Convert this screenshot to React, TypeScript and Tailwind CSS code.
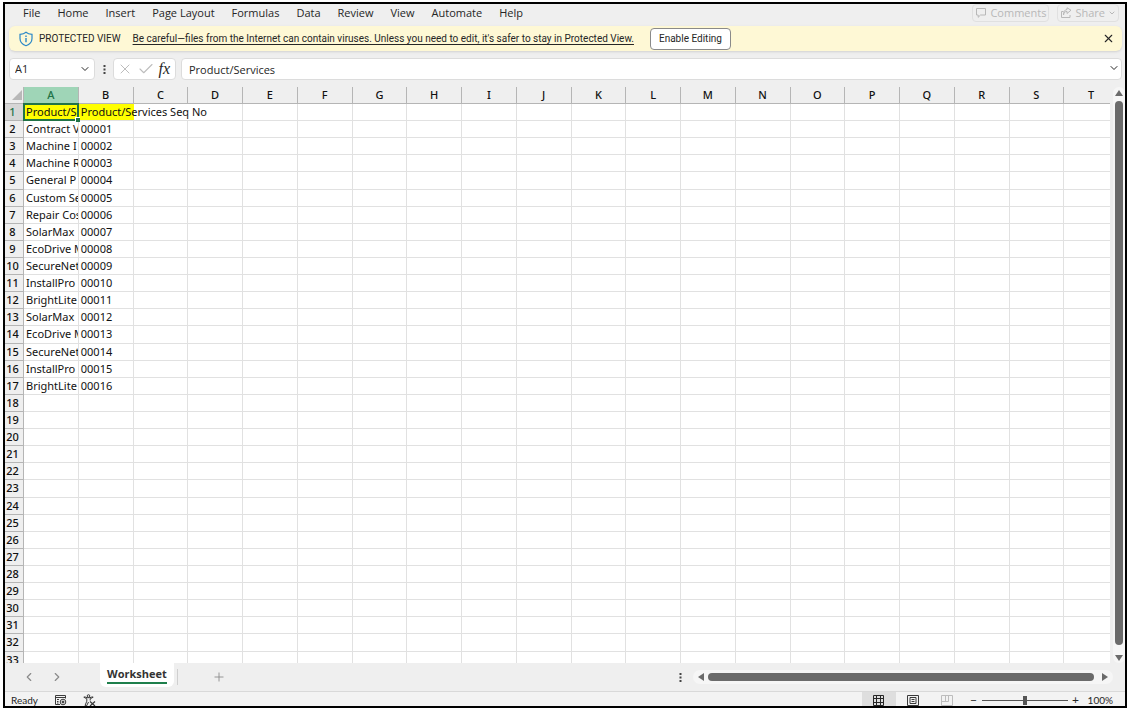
import React, { useState } from 'react';
import { Check, ChevronDown, ChevronLeft, ChevronRight, Plus, X } from 'lucide-react';

interface Row {
  name: string;
  seq: string;
}

const MENU = ['File', 'Home', 'Insert', 'Page Layout', 'Formulas', 'Data', 'Review', 'View', 'Automate', 'Help'];

const COLUMNS = 'ABCDEFGHIJKLMNOPQRST'.split('');

const ROW_COUNT = 33;

const ROWS: Row[] = [
  { name: 'Product/Services', seq: 'Product/Services Seq No' },
  { name: 'Contract V', seq: '00001' },
  { name: 'Machine I', seq: '00002' },
  { name: 'Machine R', seq: '00003' },
  { name: 'General P', seq: '00004' },
  { name: 'Custom Se', seq: '00005' },
  { name: 'Repair Cos', seq: '00006' },
  { name: 'SolarMax', seq: '00007' },
  { name: 'EcoDrive M', seq: '00008' },
  { name: 'SecureNet', seq: '00009' },
  { name: 'InstallPro', seq: '00010' },
  { name: 'BrightLite', seq: '00011' },
  { name: 'SolarMax', seq: '00012' },
  { name: 'EcoDrive M', seq: '00013' },
  { name: 'SecureNet', seq: '00014' },
  { name: 'InstallPro', seq: '00015' },
  { name: 'BrightLite', seq: '00016' },
];

const ShieldIcon = () => (
  <svg viewBox="0 0 14 16" className="h-4 w-[14px]" fill="none" stroke="#2b88c8" strokeWidth="1.2">
    <path d="M7 1.2C5.4 2.6 3.4 3.2 1 3.3v4.2c0 3.4 2.2 5.8 6 7.2 3.8-1.4 6-3.8 6-7.2V3.3C10.6 3.2 8.6 2.6 7 1.2z" />
    <path d="M7 7v4.2M7 4.6v1.4" strokeWidth="1.4" />
  </svg>
);

const CommentIcon = () => (
  <svg viewBox="0 0 12 12" className="h-3 w-3" fill="none" stroke="currentColor">
    <path d="M1.5 1.5h9V8h-5l-2.3 2.3V8H1.5z" />
  </svg>
);

const ShareIcon = () => (
  <svg viewBox="0 0 12 12" className="h-3 w-3" fill="none" stroke="currentColor">
    <path d="M3.5 4.5h-2v6H10V8M3.5 8c.3-2.5 1.5-3.5 3.5-3.600V6.500l4-3.300L7 .8v1.700C4.500 2.700 3.500 5 3.500 8z" />
  </svg>
);

const MacroIcon = () => (
  <svg viewBox="0 0 13 12" className="h-3 w-[13px]" fill="none" stroke="#3b3b3b">
    <path d="M6 10.5H1.5v-9h10v3M1.5 3.5h10M3 5.5h2M3 7.5h1.5M3 9h1.5" />
    <circle cx="9" cy="8" r="2.8" />
    <circle cx="9" cy="8" r="1" fill="#3b3b3b" />
  </svg>
);

const AccessibilityIcon = () => (
  <svg viewBox="0 0 13 13" className="h-[13px] w-[13px]" fill="none" stroke="#3b3b3b">
    <circle cx="5.5" cy="2" r="1.3" />
    <path d="M.8 3.2l3 1.6v2.4L2 11.5l1.5.5 2-4M10.2 3.2l-3 1.6v1.7M.8 3.2c.7-.6 1.2-.3 3.2.5h3c2-.8 2.5-1.1 3.2-.5" />
    <path d="M7 7.5l5 4.5M12 7.5l-5 4.5" strokeWidth="1.2" />
  </svg>
);

const GridViewIcon = () => (
  <svg viewBox="0 0 11 11" className="h-[11px] w-[11px]" fill="none" stroke="#262626">
    <path d="M.5.5h10v10H.5zM.5 3.5h10M.5 7.5h10M3.5.5v10M7.5.5v10" />
  </svg>
);

const PageViewIcon = () => (
  <svg viewBox="0 0 12 11" className="h-[11px] w-3" fill="none" stroke="#3b3b3b">
    <path d="M.5.5h11v10H.5zM3 2.5h6v6H3zM4.5 4.5h3M4.5 6.5h3" />
  </svg>
);

const BreakViewIcon = () => (
  <svg viewBox="0 0 12 11" className="h-[11px] w-3" fill="none" stroke="#bdbdbd">
    <path d="M.5.5h11v10H.5zM4.5.5v6M7.5.5v6M.5 6.5h7" />
  </svg>
);

const Dots = () => (
  <svg viewBox="0 0 3 11" className="h-[11px] w-[3px]" fill="#444">
    <rect x=".5" y="1" width="2" height="2" />
    <rect x=".5" y="4.5" width="2" height="2" />
    <rect x=".5" y="8" width="2" height="2" />
  </svg>
);

const Arrow = ({ d }: { d: string }) => (
  <svg viewBox="0 0 8 8" className="h-2 w-2 shrink-0" fill="#6b6b6b">
    <path d={d} />
  </svg>
);

const Sheet: React.FC = () => {
  const rows = Array.from({ length: ROW_COUNT }, (_, i) => ROWS[i]);

  return (
    <div className="min-w-0 flex-1 overflow-hidden">
      <table className="h-[calc(100%+6px)] w-[calc(100%+9px)] table-fixed border-separate border-spacing-0 bg-white font-['Noto_Sans',sans-serif] text-[11px] leading-4 text-[#111]">
        <thead>
          <tr className="h-[17px] bg-[#efefef]">
            <th className="w-[19px] border-r border-b border-[#b5b5b5] p-0">
              <svg viewBox="0 0 10 10" className="ml-auto h-[10px] w-3" fill="#b8b8b8">
                <path d="M10 0v10H0z" />
              </svg>
            </th>
            {COLUMNS.map((col) => (
              <th
                key={col}
                scope="col"
                className={`border-r border-b p-0 font-medium ${
                  col === 'A' ? 'border-r-[#b5b5b5] border-b-[#217346] bg-[#9fd5b7] text-[#217346]' : 'border-[#b5b5b5]'
                }`}
              >
                {col}
              </th>
            ))}
          </tr>
        </thead>
        <tbody>
          {rows.map((row, i) => (
            <tr key={i} className="h-[17px]">
              <th
                scope="row"
                className={`border-r border-b border-[#b5b5b5] p-0 pr-[3px] font-medium ${
                  i === 0 ? 'bg-[#d6d6d6] text-[#217346]' : 'bg-[#efefef]'
                }`}
              >
                {i + 1}
              </th>
              {COLUMNS.map((col) => {
                const text = col === 'A' ? row?.name : col === 'B' ? row?.seq : undefined;
                const header = i === 0 && text !== undefined;
                // the header in B runs over the empty cells to its right
                const spill = i === 0 && (col === 'B' || col === 'C');
                return (
                  <td
                    key={col}
                    className={`relative border-b border-[#e1e1e1] p-0 ${spill ? '' : 'border-r'} ${
                      header ? 'bg-[#ffff00]' : ''
                    }`}
                  >
                    {text && (
                      <div className={`pl-[2px] whitespace-nowrap ${spill ? 'relative z-10 w-0' : 'overflow-hidden'}`}>
                        {text}
                      </div>
                    )}
                    {i === 0 && col === 'A' && (
                      <div className="absolute -inset-px z-20 border-2 border-[#217346]">
                        <div className="absolute -right-[3px] -bottom-[3px] h-[5px] w-[5px] border-t border-l border-white bg-[#217346]" />
                      </div>
                    )}
                  </td>
                );
              })}
            </tr>
          ))}
        </tbody>
      </table>
    </div>
  );
};

const App: React.FC = () => {
  const [zoom, setZoom] = useState(50);
  const [showBanner, setShowBanner] = useState(true);

  return (
    <div className="h-screen bg-white px-[3px] pt-[2px] pb-[2px] font-['Open_Sans','Noto_Sans',sans-serif] text-[#262626]">
      <div className="flex h-full flex-col overflow-hidden border-2 border-black bg-[#efefef]">
        <header className="flex h-[22px] shrink-0 items-start justify-between pr-[6px] pl-[18px] text-[11px]">
          <nav className="flex gap-[17px]">
            {MENU.map((item) => (
              <button key={item} className="leading-[18px]">
                {item}
              </button>
            ))}
          </nav>
          <div className="flex gap-2 text-[#b8b8b8]">
            <button disabled className="flex h-[18px] items-center gap-[3px] rounded-sm border border-[#e0e0e0] px-[2px]">
              <CommentIcon />
              Comments
            </button>
            <button disabled className="flex h-[18px] items-center gap-[3px] rounded-sm border border-[#e0e0e0] px-[2px]">
              <ShareIcon />
              Share
              <ChevronDown size={8} strokeWidth={3} />
            </button>
          </div>
        </header>

        {showBanner && (
          <div className="mr-[3px] ml-1 flex h-[25px] shrink-0 items-center rounded-md bg-[#fef8d5] pr-[7px] pl-[10px] font-['Roboto',sans-serif] text-[10px] shadow-sm">
            <ShieldIcon />
            <span className="ml-[6px]">PROTECTED VIEW</span>
            <a href="#protected-view" className="ml-3 underline underline-offset-2">
              Be careful—files from the Internet can contain viruses. Unless you need to edit, it's safer to stay in
              Protected View.
            </a>
            <button className="ml-4 h-[22px] rounded-sm border border-[#8a8a8a] bg-white px-2">
              Enable Editing
            </button>
            <button aria-label="Close" className="ml-auto" onClick={() => setShowBanner(false)}>
              <X size={13} strokeWidth={2} />
            </button>
          </div>
        )}

        <div className="my-[7px] flex h-[22px] shrink-0 items-center pr-[3px] pl-1 text-[11px]">
          <div className="relative h-full w-[86px]">
            <select
              aria-label="Name box"
              className="h-full w-full appearance-none rounded-sm border border-[#dcdcdc] bg-white pl-[5px]"
            >
              <option>A1</option>
            </select>
            <ChevronDown size={12} className="pointer-events-none absolute top-[5px] right-1" />
          </div>
          <div className="flex w-[18px] justify-center">
            <Dots />
          </div>
          <div className="flex h-full w-[63px] items-center justify-between rounded-sm border border-[#dcdcdc] bg-white px-[3px]">
            <button aria-label="Cancel" className="text-[#bdbdbd]">
              <X size={16} strokeWidth={1.5} />
            </button>
            <button aria-label="Enter" className="text-[#bdbdbd]">
              <Check size={18} strokeWidth={1.5} />
            </button>
            <button
              aria-label="Insert function"
              className="pr-[2px] font-['Liberation_Serif',serif] text-[16px] leading-4 font-medium italic"
            >
              fx
            </button>
          </div>
          <div className="relative ml-[5px] h-full flex-1">
            <input
              aria-label="Formula bar"
              defaultValue="Product/Services"
              className="h-full w-full rounded-sm border border-[#dcdcdc] bg-white pl-[7px]"
            />
            <ChevronDown size={12} className="pointer-events-none absolute top-1 right-[2px]" />
          </div>
        </div>

        <main className="flex min-h-0 flex-1">
          <Sheet />
          <div className="ml-[3px] flex w-3 shrink-0 flex-col items-center rounded-md bg-[#f6f6f6] pt-[2px]">
            <Arrow d="M4 1l4 6H0z" />
            <div className="my-1 w-2 flex-1 rounded-full bg-[#6b6b6b]" />
            <div className="flex h-[14px] items-end pb-px">
              <Arrow d="M0 1h8L4 7z" />
            </div>
          </div>
        </main>

        <div className="flex h-7 shrink-0 items-center pr-3 text-[#8a8a8a]">
          <button aria-label="Previous sheet" className="ml-[17px]">
            <ChevronLeft size={14} strokeWidth={2} />
          </button>
          <button aria-label="Next sheet" className="ml-[14px]">
            <ChevronRight size={14} strokeWidth={2} />
          </button>
          <div className="ml-9 h-full pb-1">
            <button className="flex h-full items-center rounded-b-md bg-white px-[7px] text-[11px] font-bold text-[#333]">
              <span className="border-b-2 border-[#1e7f4c] leading-4">Worksheet</span>
            </button>
          </div>
          <div className="ml-[3px] h-4 border-l border-[#cfcfcf]" />
          <button aria-label="New sheet" className="ml-[34px]">
            <Plus size={14} strokeWidth={1.5} />
          </button>
          <div className="ml-auto flex w-[calc(39%+2px)] items-center">
            <Dots />
            <div className="ml-[11px] flex h-[14px] flex-1 items-center gap-[3px] rounded-full bg-[#f6f6f6] px-1">
              <Arrow d="M7 0v8L1 4z" />
              <div className="h-2 flex-1 rounded-full bg-[#6b6b6b]" />
              <div className="ml-1">
                <Arrow d="M1 0v8l6-4z" />
              </div>
            </div>
          </div>
        </div>

        <footer className="flex h-[15px] shrink-0 border-t border-[#d9d9d9] bg-[#f3f3f3] pr-3 pl-[6px] font-['Lato',sans-serif] text-[10px]">
          <div className="flex h-4 items-center gap-4">
            <span>Ready</span>
            <MacroIcon />
            <AccessibilityIcon />
          </div>
          <div className="ml-auto flex h-4 items-center">
            <button aria-label="Normal view" className="flex h-4 w-[34px] items-center justify-center bg-[#dedede]">
              <GridViewIcon />
            </button>
            <button aria-label="Page layout view" className="flex h-4 w-[34px] items-center justify-center">
              <PageViewIcon />
            </button>
            <button aria-label="Page break view" className="flex h-4 w-[34px] items-center justify-center">
              <BreakViewIcon />
            </button>
            <button aria-label="Zoom out" className="ml-1 h-4 w-3 text-[12px] leading-4">
              −
            </button>
            <input
              type="range"
              aria-label="Zoom"
              value={zoom}
              onChange={(e) => setZoom(Number(e.target.value))}
              className="mx-[2px] h-4 w-[86px] appearance-none bg-transparent [&::-webkit-slider-runnable-track]:h-px [&::-webkit-slider-runnable-track]:bg-[#555] [&::-webkit-slider-thumb]:-mt-1 [&::-webkit-slider-thumb]:h-[9px] [&::-webkit-slider-thumb]:w-1 [&::-webkit-slider-thumb]:appearance-none [&::-webkit-slider-thumb]:bg-[#555]"
            />
            <button aria-label="Zoom in" className="h-4 w-3 text-[12px] leading-4">
              +
            </button>
            <span className="ml-[6px]">100%</span>
          </div>
        </footer>
      </div>
    </div>
  );
};

export default App;
